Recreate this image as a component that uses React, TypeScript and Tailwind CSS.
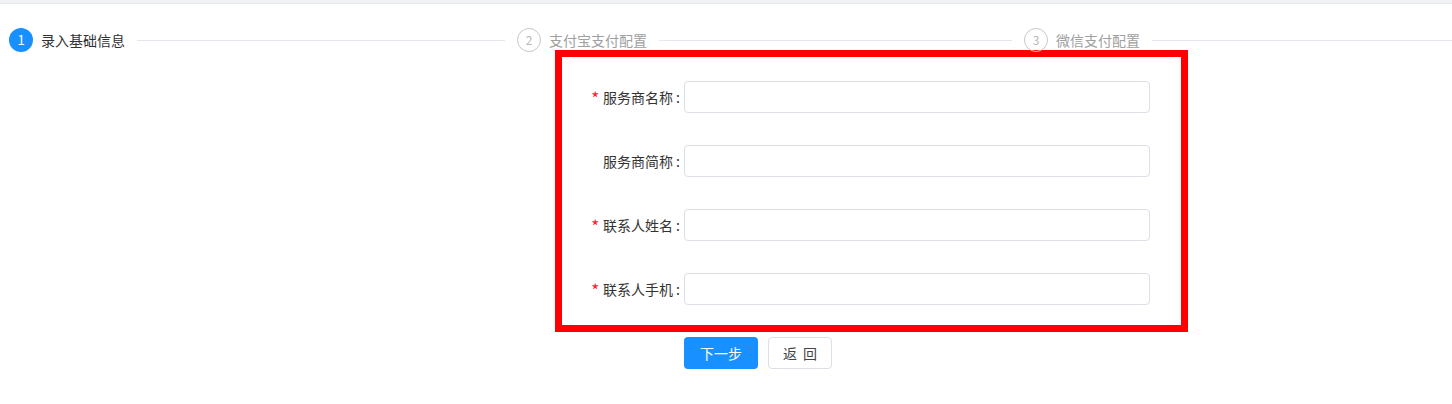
import React from "react";

const font = { fontFamily: '"Noto Sans CJK SC", "Noto Sans", sans-serif' };

function Step({ n, title, active, w }: { n: number; title: string; active?: boolean; w: string }) {
  return (
    <div className={`flex ${w} shrink-0 items-center`}>
      {active ? (
        <div className="flex h-6 w-6 shrink-0 items-center justify-center rounded-full bg-[#1890ff] text-[13px] text-white">
          {n}
        </div>
      ) : (
        <div className="flex h-6 w-6 shrink-0 items-center justify-center rounded-full border border-[#c8c8c8] text-[12px] text-[#b8b8b8]">
          {n}
        </div>
      )}
      <div className={`ml-2 whitespace-nowrap text-[14px] leading-6 ${active ? "text-[#303133]" : "text-[#a0a0a0]"}`}>
        {title}
      </div>
      <div className="mx-3 h-px flex-1 bg-[#e4e7ed]" />
    </div>
  );
}

function Row({ label, required }: { label: string; required?: boolean }) {
  return (
    <div className="flex h-8 items-center">
      <div className="flex w-[122px] shrink-0 items-center justify-end pr-[4px] text-[14px] text-[#333333]">
        {required && <span className="mr-[4px] text-[17px] leading-none text-[#f5222d]">*</span>}
        <span>{label}</span>
        <span className="ml-[3px]">:</span>
      </div>
      <input
        type="text"
        className="h-8 w-[466px] rounded-[4px] border border-[#dcdfe6] bg-white px-3 text-[14px] outline-none"
      />
    </div>
  );
}

export default function App() {
  return (
    <div className="min-h-[404px] w-[1452px] overflow-hidden bg-white" style={font}>
      <div className="h-[4px] border-b border-[#e6e8eb] bg-[#f0f2f5]" />
      <div className="mt-[24px] flex h-6 w-[1600px] pl-[9px]">
        <Step n={1} title="录入基础信息" active w="w-[508px]" />
        <Step n={2} title="支付宝支付配置" w="w-[507px]" />
        <Step n={3} title="微信支付配置" w="w-[508px]" />
      </div>
      <div className="-mt-[2px] ml-[555px] w-[633px] border-[7px] border-[#ff0000] pb-[20px] pt-[24px]">
        <div className="flex flex-col gap-8">
          <Row label="服务商名称" required />
          <Row label="服务商简称" />
          <Row label="联系人姓名" required />
          <Row label="联系人手机" required />
        </div>
      </div>
      <div className="ml-[684px] mt-[5px] flex gap-[10px]">
        <button className="h-8 w-[74px] rounded-[4px] bg-[#1890ff] text-[14px] text-white">下一步</button>
        <button className="flex h-8 w-[64px] items-center justify-center rounded-[4px] border border-[#dcdfe6] bg-white text-[14px] text-[#444444]">
          <span>返</span>
          <span className="ml-[6px]">回</span>
        </button>
      </div>
    </div>
  );
}
